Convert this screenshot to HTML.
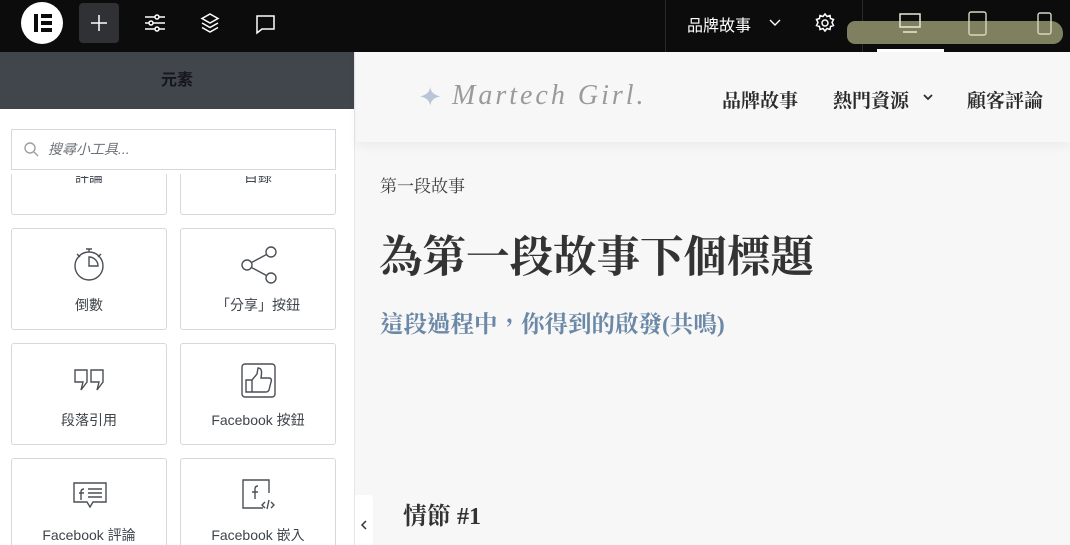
<!DOCTYPE html>
<html><head><meta charset="utf-8"><style>
*{margin:0;padding:0;box-sizing:border-box}
body{width:1070px;height:545px;overflow:hidden;background:#f7f7f7;font-family:"Liberation Sans","Noto Sans CJK TC",sans-serif;position:relative}
.top{position:absolute;left:0;top:0;width:1070px;height:52px;background:#0c0c0c}
.abs{position:absolute}
.panel{position:absolute;left:0;top:52px;width:355px;height:493px;background:#fff;border-right:1px solid #e6e6e6;overflow:hidden}
.ph{height:57px;background:#41464d;text-align:center;line-height:57px;font-size:16px;font-weight:bold;color:#15171a}
.search{position:absolute;left:11px;top:77px;width:325px;height:41px;border:1px solid #d5d8dc;font-size:14px;font-style:italic;color:#6d7278;padding-left:36px;line-height:39px;background:#fff;z-index:2}
.card{position:absolute;width:156px;height:102px;border:1px solid #d5d8dc;border-radius:3px;text-align:center;font-size:14px;color:#3f444b;overflow:hidden}
.card .l{position:absolute;left:0;right:0;top:66px}
.card svg{position:absolute;left:61px;top:17px}
.serif{font-family:"Liberation Serif","Noto Serif CJK TC","Noto Serif CJK SC",serif}
</style></head><body>
<div class="top">
 <div class="abs" style="left:21px;top:2px;width:42px;height:42px;border-radius:50%;background:#fff"></div>
 <div class="abs" style="left:34px;top:14px;width:4px;height:18px;background:#0c0c0c"></div>
 <div class="abs" style="left:41px;top:14px;width:11px;height:4px;background:#0c0c0c"></div>
 <div class="abs" style="left:41px;top:21px;width:11px;height:4px;background:#0c0c0c"></div>
 <div class="abs" style="left:41px;top:28px;width:11px;height:4px;background:#0c0c0c"></div>
 <div class="abs" style="left:79px;top:3px;width:40px;height:40px;border-radius:4px;background:#2f3134"></div>
 <svg class="abs" style="left:89px;top:13px" width="20" height="20"><path d="M10 2v16M2 10h16" stroke="#fff" stroke-width="1.5"/></svg>
 <svg class="abs" style="left:144px;top:13px" width="22" height="20" fill="none" stroke="#fff" stroke-width="1.5"><path d="M1 4h20M1 10h20M1 16h20"/><circle cx="13" cy="4" r="2" fill="#0c0c0c"/><circle cx="7" cy="10" r="2" fill="#0c0c0c"/><circle cx="13" cy="16" r="2" fill="#0c0c0c"/></svg>
 <svg class="abs" style="left:200px;top:12px" width="20" height="22" fill="none" stroke="#fff" stroke-width="1.5"><path d="M10 2l8 4.5-8 4.5-8-4.5z M2 11l8 4.5 8-4.5M2 15.5l8 4.5 8-4.5"/></svg>
 <svg class="abs" style="left:255px;top:13px" width="22" height="22" fill="none" stroke="#fff" stroke-width="1.5"><path d="M2 3h17v13H7l-5 4z"/></svg>
 <div class="abs" style="left:665px;top:0;width:1px;height:52px;background:#2a2a2a"></div>
 <div class="abs" style="left:862px;top:0;width:1px;height:52px;background:#2a2a2a"></div>
 <div class="abs" style="left:687px;top:12px;font-size:16px;color:#fff">品牌故事</div>
 <svg class="abs" style="left:768px;top:18px" width="14" height="10" fill="none" stroke="#fff" stroke-width="1.4"><path d="M2 2l5 5 5-5"/></svg>
 <svg class="abs" style="left:814px;top:12px" width="22" height="22" fill="none" stroke="#fff" stroke-width="1.5"><circle cx="11" cy="11" r="3"/><path d="M11 2l2 2.5 3-1 .5 3 3 1-1.5 3 1.5 3-3 1-.5 3-3-1-2 2.5-2-2.5-3 1-.5-3-3-1 1.5-3-1.5-3 3-1 .5-3 3 1z"/></svg>
 <div class="abs" style="left:847px;top:21px;width:216px;height:23px;background:#7e8060;border-radius:8px 12px 10px 8px"></div>
 <svg class="abs" style="left:898px;top:12px" width="24" height="22" fill="none" stroke="#e8e8d8" stroke-width="1.5"><rect x="2" y="2" width="20" height="13"/><path d="M5 20h14"/></svg>
 <svg class="abs" style="left:967px;top:11px" width="22" height="26" fill="none" stroke="#d8d8c0" stroke-width="1.4"><rect x="2" y="1" width="17" height="23" rx="2"/></svg>
 <svg class="abs" style="left:1036px;top:12px" width="18" height="24" fill="none" stroke="#d8d8c0" stroke-width="1.4"><rect x="2" y="1" width="13" height="21" rx="2"/></svg>
 <div class="abs" style="left:877px;top:49px;width:67px;height:3px;background:#fff"></div>
</div>
<div class="panel">
 <div class="ph">元素</div>
 <div class="search">搜尋小工具...</div>
 <svg class="abs" style="left:23px;top:89px;z-index:3" width="16" height="16" fill="none" stroke="#9aa0a6" stroke-width="1.4"><circle cx="7" cy="7" r="5"/><path d="M11 11l4 4"/></svg>
 <div class="card" style="left:11px;top:122px;height:41px;border-top:none;border-radius:0 0 3px 3px"><div style="position:absolute;left:0;right:0;top:2px;height:10px;overflow:hidden;font-size:14px;line-height:10px"><span style="position:relative;top:-4px">評論</span></div></div>
 <div class="card" style="left:180px;top:122px;height:41px;border-top:none;border-radius:0 0 3px 3px"><div style="position:absolute;left:0;right:0;top:2px;height:10px;overflow:hidden;font-size:14px;line-height:10px"><span style="position:relative;top:-4px">目錄</span></div></div>
 <div class="card" style="left:11px;top:176px"><svg width="34" height="36" fill="none" stroke="#4a4f55" stroke-width="1.4" style="left:61px;top:16px"><circle cx="16" cy="21" r="14"/><path d="M13 4h6M16 4v3M4 9l3 3M28 9l-3 3M16 21V12a9 9 0 0 1 9 9z"/></svg><div class="l">倒數</div></div>
 <div class="card" style="left:180px;top:176px"><svg width="38" height="38" fill="none" stroke="#4a4f55" stroke-width="1.4" style="left:60px;top:17px"><circle cx="30" cy="6" r="5"/><circle cx="6" cy="19" r="5"/><circle cx="30" cy="32" r="5"/><path d="M10.5 16.5l15-8M10.5 21.5l15 8"/></svg><div class="l">「分享」按鈕</div></div>
 <div class="card" style="left:11px;top:291px"><svg width="34" height="28" fill="none" stroke="#4a4f55" stroke-width="1.4" style="left:61px;top:24px"><path d="M2 2h12v12l-6 8 2-8H2zM18 2h12v12l-6 8 2-8h-8z"/></svg><div class="l">段落引用</div></div>
 <div class="card" style="left:180px;top:291px"><svg width="36" height="36" fill="none" stroke="#4a4f55" stroke-width="1.4" style="left:60px;top:19px"><rect x="1" y="1" width="33" height="33" rx="3"/><path d="M5 17h6v12H5zM11 17l5-6 1-6c4 0 4 4 3 10h8c2 0 3 2 2 4l-2 8c-1 2-2 2-4 2H11"/></svg><div class="l">Facebook 按鈕</div></div>
 <div class="card" style="left:11px;top:406px"><svg width="36" height="30" fill="none" stroke="#4a4f55" stroke-width="1.4" style="left:60px;top:22px"><path d="M2 2h32v19H21l-3 5-3-5H2z"/><path d="M12 8c-2 0-3 1-3 3v8M7 12h5M16 8h14M16 12h14M16 16h14"/></svg><div class="l">Facebook 評論</div></div>
 <div class="card" style="left:180px;top:406px"><svg width="38" height="34" fill="none" stroke="#4a4f55" stroke-width="1.4" style="left:60px;top:19px"><path d="M28 15V2H2v28h20"/><path d="M17 8c-2 0-3 1-3 3v10M11 14h6M24 24l-3 3 3 3M28 22l-2 9M30 24l3 3-3 3"/></svg><div class="l">Facebook 嵌入</div></div>
</div>
<div class="abs" style="left:355px;top:495px;width:18px;height:50px;background:#fff;border-radius:0 4px 0 0"></div>
<svg class="abs" style="left:359px;top:520px" width="10" height="10" fill="none" stroke="#333" stroke-width="1.5"><path d="M7 1L3 5l4 4"/></svg>
<div class="abs" style="left:356px;top:52px;width:714px;height:90px;background:#f7f7f7;box-shadow:0 4px 10px rgba(0,0,0,.05)"></div>
<svg class="abs" style="left:415px;top:82px" width="30" height="30"><path d="M15 2q1 10 13 12q-12 2-13 12q-1-10-13-12q12-2 13-12z" fill="#b8c6d8" transform="scale(.8) translate(4,4)"/></svg>
<div class="abs" style="left:452px;top:80px;font-family:'Liberation Serif',serif;font-style:italic;font-size:28px;color:#9a9a9a;letter-spacing:3px">Martech Girl.</div>
<div class="abs serif" style="left:722px;top:86px;font-size:19px;font-weight:bold;color:#2b2b2b">品牌故事</div>
<div class="abs serif" style="left:833px;top:86px;font-size:19px;font-weight:bold;color:#2b2b2b">熱門資源</div>
<svg class="abs" style="left:922px;top:93px" width="12" height="10" fill="none" stroke="#2b2b2b" stroke-width="1.8"><path d="M2 2l4 4 4-4"/></svg>
<div class="abs serif" style="left:967px;top:86px;font-size:19px;font-weight:bold;color:#2b2b2b">顧客評論</div>
<div class="abs serif" style="left:380px;top:172px;font-size:17px;color:#3f3f3f">第一段故事</div>
<div class="abs serif" style="left:379px;top:230px;font-size:43.5px;font-weight:bold;color:#333;line-height:56px">為第一段故事下個標題</div>
<div class="abs serif" style="left:380px;top:305px;font-size:23.5px;font-weight:bold;color:#6b88a6">這段過程中，你得到的啟發(共鳴)</div>
<div class="abs serif" style="left:403px;top:496px;font-size:24px;font-weight:bold;color:#333">情節 #1</div>
</body></html>
